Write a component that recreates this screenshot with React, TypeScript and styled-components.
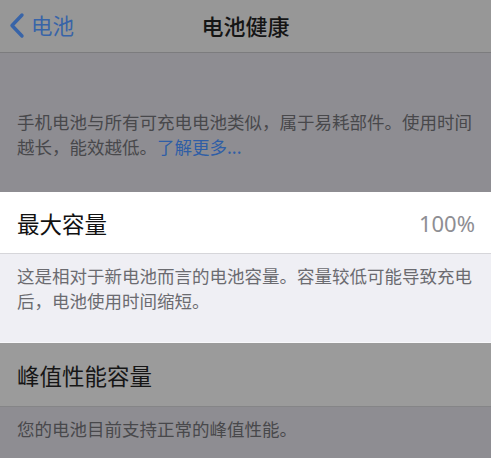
import React from 'react';
import styled, { createGlobalStyle } from "styled-components";

const GlobalStyle = createGlobalStyle`
  html, body {
    margin: 0;
    padding: 0;
    background: #8e8d92;
  }
  body {
    font-family: "Noto Sans CJK SC", "Noto Sans", sans-serif;
    -webkit-font-smoothing: antialiased;
  }
`

const Page = styled.div`
  width: 491px;
  height: 458px;
  overflow: hidden;
  background: #8e8d92;
`

const NavBar = styled.div`
  height: 52px;
  display: grid;
  grid-template-columns: 1fr auto 1fr;
  align-items: center;
  background: #979797;
  border-bottom: 1px solid #7c7c7e;
`

const BackButton = styled.div`
  display: flex;
  align-items: center;
  gap: 5px;
  padding-left: 8px;
  color: #3864a8;
  font-size: 21.5px;
  line-height: 1;
  margin-top: -2px;

  svg {
    width: 18px;
    height: 27px;
  }
`

const Title = styled.div`
  font-size: 22px;
  font-weight: 500;
  color: #151515;
  margin-top: -3px;
`

const Footnote = styled.div<{ $light?: boolean; $top: number; $bottom: number }>`
  padding: ${p => p.$top}px 17px ${p => p.$bottom}px 17px;
  font-size: 17.5px;
  line-height: 24.5px;
  color: ${p => (p.$light ? "#6b6b70" : "#48484b")};
  background: ${p => (p.$light ? "#efeff4" : "transparent")};
  border-bottom: ${p => (p.$light ? "1px solid #f8f8fa" : "none")};
`

const Link = styled.span`
  color: #2f5ea6;
`

const Row = styled.div<{ $dim?: boolean; $height: number }>`
  height: ${p => p.$height}px;
  display: flex;
  align-items: center;
  justify-content: space-between;
  padding: 0 16px 0 17px;
  background: ${p => (p.$dim ? "#9b9b9b" : "#ffffff")};
  border-bottom: 1px solid ${p => (p.$dim ? "#858587" : "#d6d6da")};
  font-size: 22.5px;
  color: ${p => (p.$dim ? "#161616" : "#111111")};
`

const Value = styled.span`
  font-family: "Noto Sans", "Inter", sans-serif;
  font-size: 22px;
  color: #8e8e93;
`

const Highlight = styled.div`
  background: #efeff4;
`

const App = () => (
  <Page>
    <GlobalStyle />
    <NavBar>
      <BackButton>
        <svg viewBox="0 0 18 27" fill="none" stroke="#3864a8" strokeWidth="3.4" strokeLinecap="round" strokeLinejoin="round">
          <path d="M14 3 L4 13.5 L14 24" />
        </svg>
        <span>电池</span>
      </BackButton>
      <Title>电池健康</Title>
      <div />
    </NavBar>

    <Footnote $top={57} $bottom={33}>
      手机电池与所有可充电电池类似，属于易耗部件。使用时间越长，能效越低。<Link>了解更多...</Link>
    </Footnote>

    <Highlight>
      <Row $height={61}>
        <span>最大容量</span>
        <Value>100%</Value>
      </Row>
      <Footnote $light $top={10} $bottom={29}>
        这是相对于新电池而言的电池容量。容量较低可能导致充电后，电池使用时间缩短。
      </Footnote>
    </Highlight>

    <Row $dim $height={63}>
      <span>峰值性能容量</span>
    </Row>
    <Footnote $top={10} $bottom={20}>
      您的电池目前支持正常的峰值性能。
    </Footnote>
  </Page>
);

export default App;
